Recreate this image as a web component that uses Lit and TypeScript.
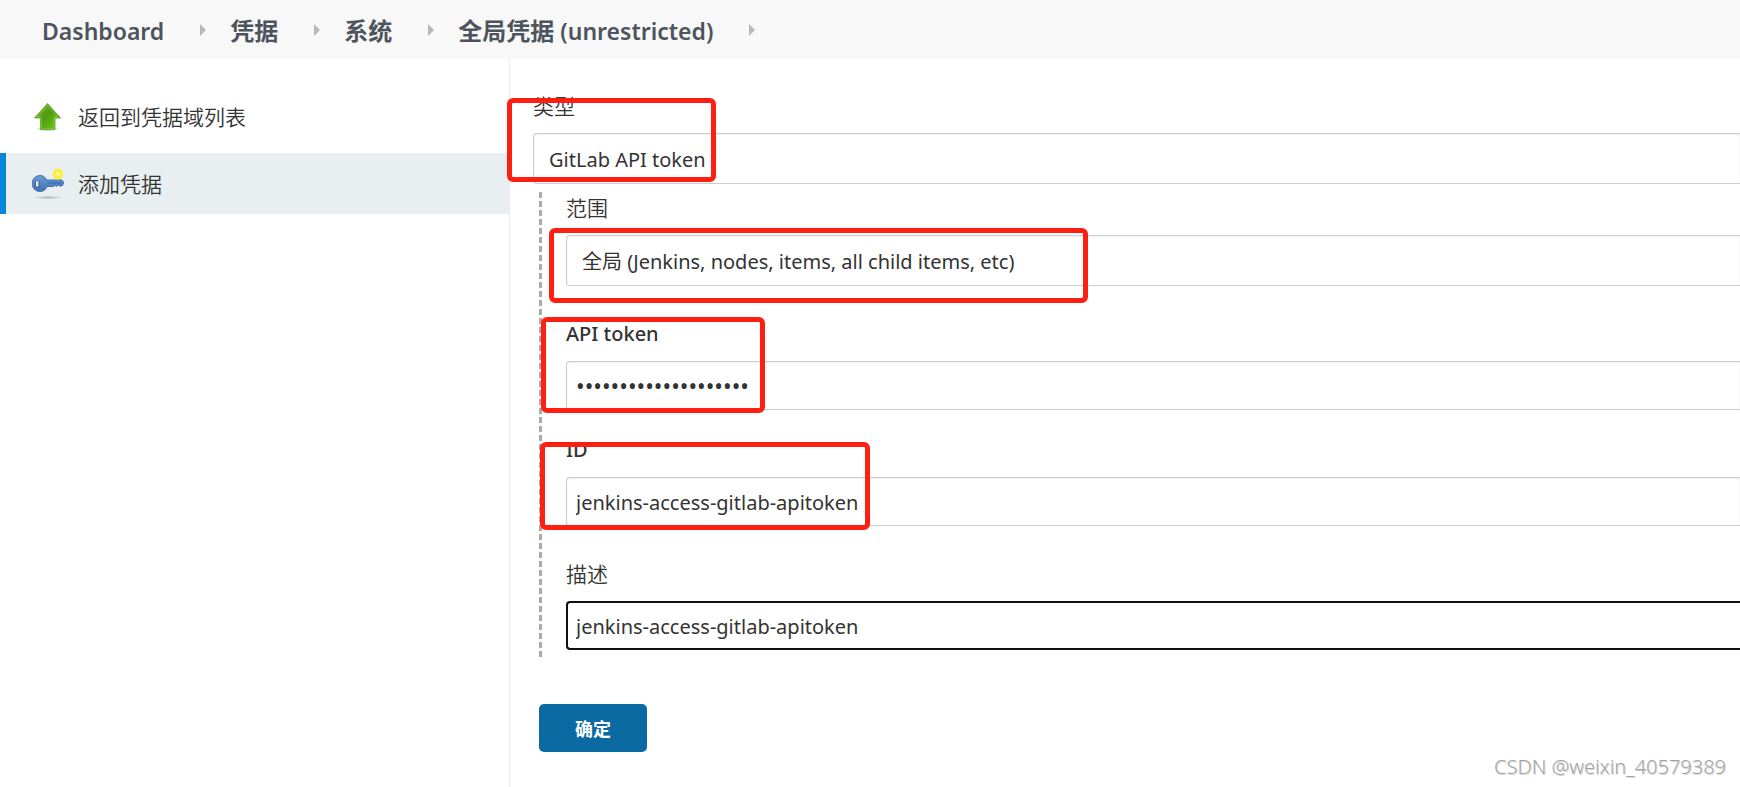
import { LitElement, html, css, svg } from "lit";
import { customElement, property } from "lit/decorators.js";

const upIcon = html`<svg class="icon" viewBox="0 0 32 32" aria-hidden="true">
  <defs>
    <linearGradient id="g" x1="0" y1="0" x2="1" y2="1">
      <stop offset="0" stop-color="#8cc63e" /><stop offset="0.45" stop-color="#4f9a12" /><stop offset="1" stop-color="#6cd00c" />
    </linearGradient>
    <radialGradient id="s"><stop offset="0" stop-color="#000" stop-opacity="0.4" /><stop offset="1" stop-color="#000" stop-opacity="0" /></radialGradient>
  </defs>
  <ellipse cx="15.500" cy="28" rx="12" ry="2.500" fill="url(#s)" />
  <path d="M15.500 2.500 L28.500 17 H23 V28.300 H8.500 V17 H2.500 Z" fill="url(#g)" stroke="#5aa52a" stroke-width="0.800" stroke-linejoin="round" />
  <path d="M15.500 4.500 L26 16.200 H22 V27.300 H9.500 V16.200 H5 Z" fill="none" stroke="#a5dd62" stroke-opacity="0.550" stroke-width="0.800" />
</svg>`;

const keyIcon = html`<svg class="icon" viewBox="0 0 32 32" aria-hidden="true">
  <defs>
    <radialGradient id="y"><stop offset="0" stop-color="#fffde0" /><stop offset="0.3" stop-color="#fdf47a" /><stop offset="0.5" stop-color="#fbee25" /><stop offset="0.8" stop-color="#faef3c" stop-opacity="0.9" /><stop offset="1" stop-color="#faef3c" stop-opacity="0" /></radialGradient>
    <radialGradient id="d"><stop offset="0" stop-color="#000" stop-opacity="0.25" /><stop offset="1" stop-color="#000" stop-opacity="0" /></radialGradient>
    <linearGradient id="b" x1="0" y1="0" x2="0" y2="1"><stop offset="0" stop-color="#6d9bd3" /><stop offset="1" stop-color="#3f73b5" /></linearGradient>
  </defs>
  <ellipse cx="16" cy="29.500" rx="15" ry="2" fill="url(#d)" />
  <path d="M8 7.500 C11.500 7.500 13.500 9.500 14.500 12 H30 L32 15 L30 18 H27.500 L26 17 L24.500 18.500 L23 17.300 L21.500 18.500 H15 C14 21.500 11.500 23.500 8 23.500 C3.500 23.500 0.200 20 0.200 15.500 C0.200 11 3.500 7.500 8 7.500 Z" fill="url(#b)" stroke="#3a6bab" stroke-width="0.900" />
  <path d="M16 15 H29.500" stroke="#3465a4" stroke-width="1" />
  <rect x="3.500" y="12.500" width="3.500" height="6.500" rx="1.200" fill="#e9eef0" stroke="#34588c" stroke-width="1" />
  <circle cx="26" cy="6" r="6" fill="url(#y)" />
</svg>`;

@customElement("crumb-bar")
class CrumbBar extends LitElement {
  @property({ attribute: false }) items: string[] = [];
  static styles = css`
    :host { display: block; background: #f8f8f8; }
    ol { display: flex; align-items: center; height: 59px; margin: 0; padding: 0 42px; list-style: none; }
    li { display: flex; align-items: center; white-space: nowrap; }
    a { color: #4d545d; text-decoration: none; font-size: 24px; font-weight: 700; line-height: 32px; padding-top: 2px; }
    .latin { font-size: 23px; font-weight: 600; }
    svg { width: 6px; height: 12px; margin: 0 24px 0 36px; fill: #b8b8b8; }
  `;
  render() {
    return html`<nav aria-label="breadcrumb"><ol>
      ${this.items.map((t) => html`<li><a href="#">${t.split(/([ -~]+)/).map((p) => (/^[ -~]+$/.test(p) ? html`<span class="latin">${p}</span>` : p))}</a><svg viewBox="0 0 6 12" aria-hidden="true">${svg`<path d="M0 0 L6 6 L0 12 Z" />`}</svg></li>`)}
    </ol></nav>`;
  }
}

@customElement("side-tasks")
class SideTasks extends LitElement {
  static styles = css`
    :host { display: block; padding-top: 27px; border-right: 1px solid #e9eef0; }
    a { display: flex; align-items: center; gap: 14px; height: 61px; padding-left: 26px; border-left: 6px solid transparent; color: #333; text-decoration: none; font-size: 21px; line-height: 28px; font-weight: 350; }
    a + a { margin-top: 6px; }
    .active { background: #e9eef0; border-left-color: #0b87d8; }
    .icon { width: 32px; height: 32px; }
  `;
  render() {
    return html`<nav>
      <a href="#">${upIcon}<span>返回到凭据域列表</span></a>
      <a class="active" href="#" aria-current="page">${keyIcon}<span>添加凭据</span></a>
    </nav>`;
  }
}

@customElement("app-root")
class AppRoot extends LitElement {
  static styles = css`
    * { box-sizing: border-box; }
    :host { display: flex; flex-direction: column; position: relative; min-height: 100vh; background: #fff; color: #333; overflow: hidden; font-family: "Noto Sans", "Noto Sans CJK SC", sans-serif; }
    .body { display: grid; grid-template-columns: 510px 1fr; flex: 1; }
    form { padding: 33px 0 24px 23px; }
    .field { position: relative; display: flex; flex-direction: column; }
    label { font-size: 20px; line-height: 28px; }
    .cjk { font-size: 21px; font-weight: 350; }
    .medium { font-weight: 500; }
    select, input { appearance: none; width: 100%; margin: 0; border: 1px solid #ccc; border-right: 0; border-radius: 4px 0 0 4px; background: #fff; box-shadow: inset 0 1px 2px #0001; color: #333; font-family: inherit; font-size: 20px; outline: none; }
    select { height: 51px; padding: 2px 15px 0; }
    input { height: 49px; padding: 2px 9px 0; }
    .type select { margin-top: 13px; }
    .nested { display: flex; flex-direction: column; margin: 8px 0 0 6px; padding: 2px 0 8px 27px; background: repeating-linear-gradient(#aaa 0 6px, #fff0 6px 9px) 0 0 / 3px 100% no-repeat; }
    .nested select, .nested input { margin-top: 13px; }
    .scope { margin-bottom: 34px; }
    .token { margin-bottom: 26px; }
    .token input { font-size: 23px; padding-top: 0; }
    .ident { margin-bottom: 34px; }
    .focused { border: 2px solid #111; border-right: 0; padding-left: 8px; box-shadow: none; }
    button { margin: 46px 0 0 6px; width: 108px; height: 48px; border: 0; border-radius: 5px; background: #0b6aa2; color: #fff; font-family: inherit; font-size: 18px; font-weight: 700; }
    .mark { position: absolute; border: 5px solid #ff1f12; border-radius: 6px; pointer-events: none; }
    .type .mark { left: -26px; top: 6px; width: 209px; height: 84px; }
    .scope .mark { left: -17px; top: 34px; width: 539px; height: 75px; }
    .token .mark { left: -25px; top: -3px; width: 224px; height: 96px; }
    .ident .mark { left: -26px; top: 6px; width: 330px; height: 88px; }
    .credit { position: absolute; right: 14px; bottom: 6px; color: #a4a4a4; text-shadow: 1px 1px 0 #9996; font-size: 20px; font-weight: 300; line-height: 28px; }
  `;
  render() {
    return html`
      <crumb-bar .items=${["Dashboard", "凭据", "系统", "全局凭据 (unrestricted)"]}></crumb-bar>
      <div class="body">
        <side-tasks></side-tasks>
        <form>
          <div class="field type">
            <label class="cjk" for="type">类型</label>
            <select id="type"><option>GitLab API token</option></select>
            <span class="mark"></span>
          </div>
          <div class="nested">
            <div class="field scope">
              <label class="cjk" for="scope">范围</label>
              <select id="scope"><option>全局 (Jenkins, nodes, items, all child items, etc)</option></select>
              <span class="mark"></span>
            </div>
            <div class="field token">
              <label class="medium" for="token">API token</label>
              <input id="token" type="password" value="abcdefghijklmnopqrst" />
              <span class="mark"></span>
            </div>
            <div class="field ident">
              <label class="medium" for="ident">ID</label>
              <input id="ident" type="text" value="jenkins-access-gitlab-apitoken" />
              <span class="mark"></span>
            </div>
            <div class="field">
              <label class="cjk" for="desc">描述</label>
              <input id="desc" class="focused" type="text" value="jenkins-access-gitlab-apitoken" />
            </div>
          </div>
          <button type="button">确定</button>
        </form>
      </div>
      <div class="credit">CSDN @weixin_40579389</div>`;
  }
}
